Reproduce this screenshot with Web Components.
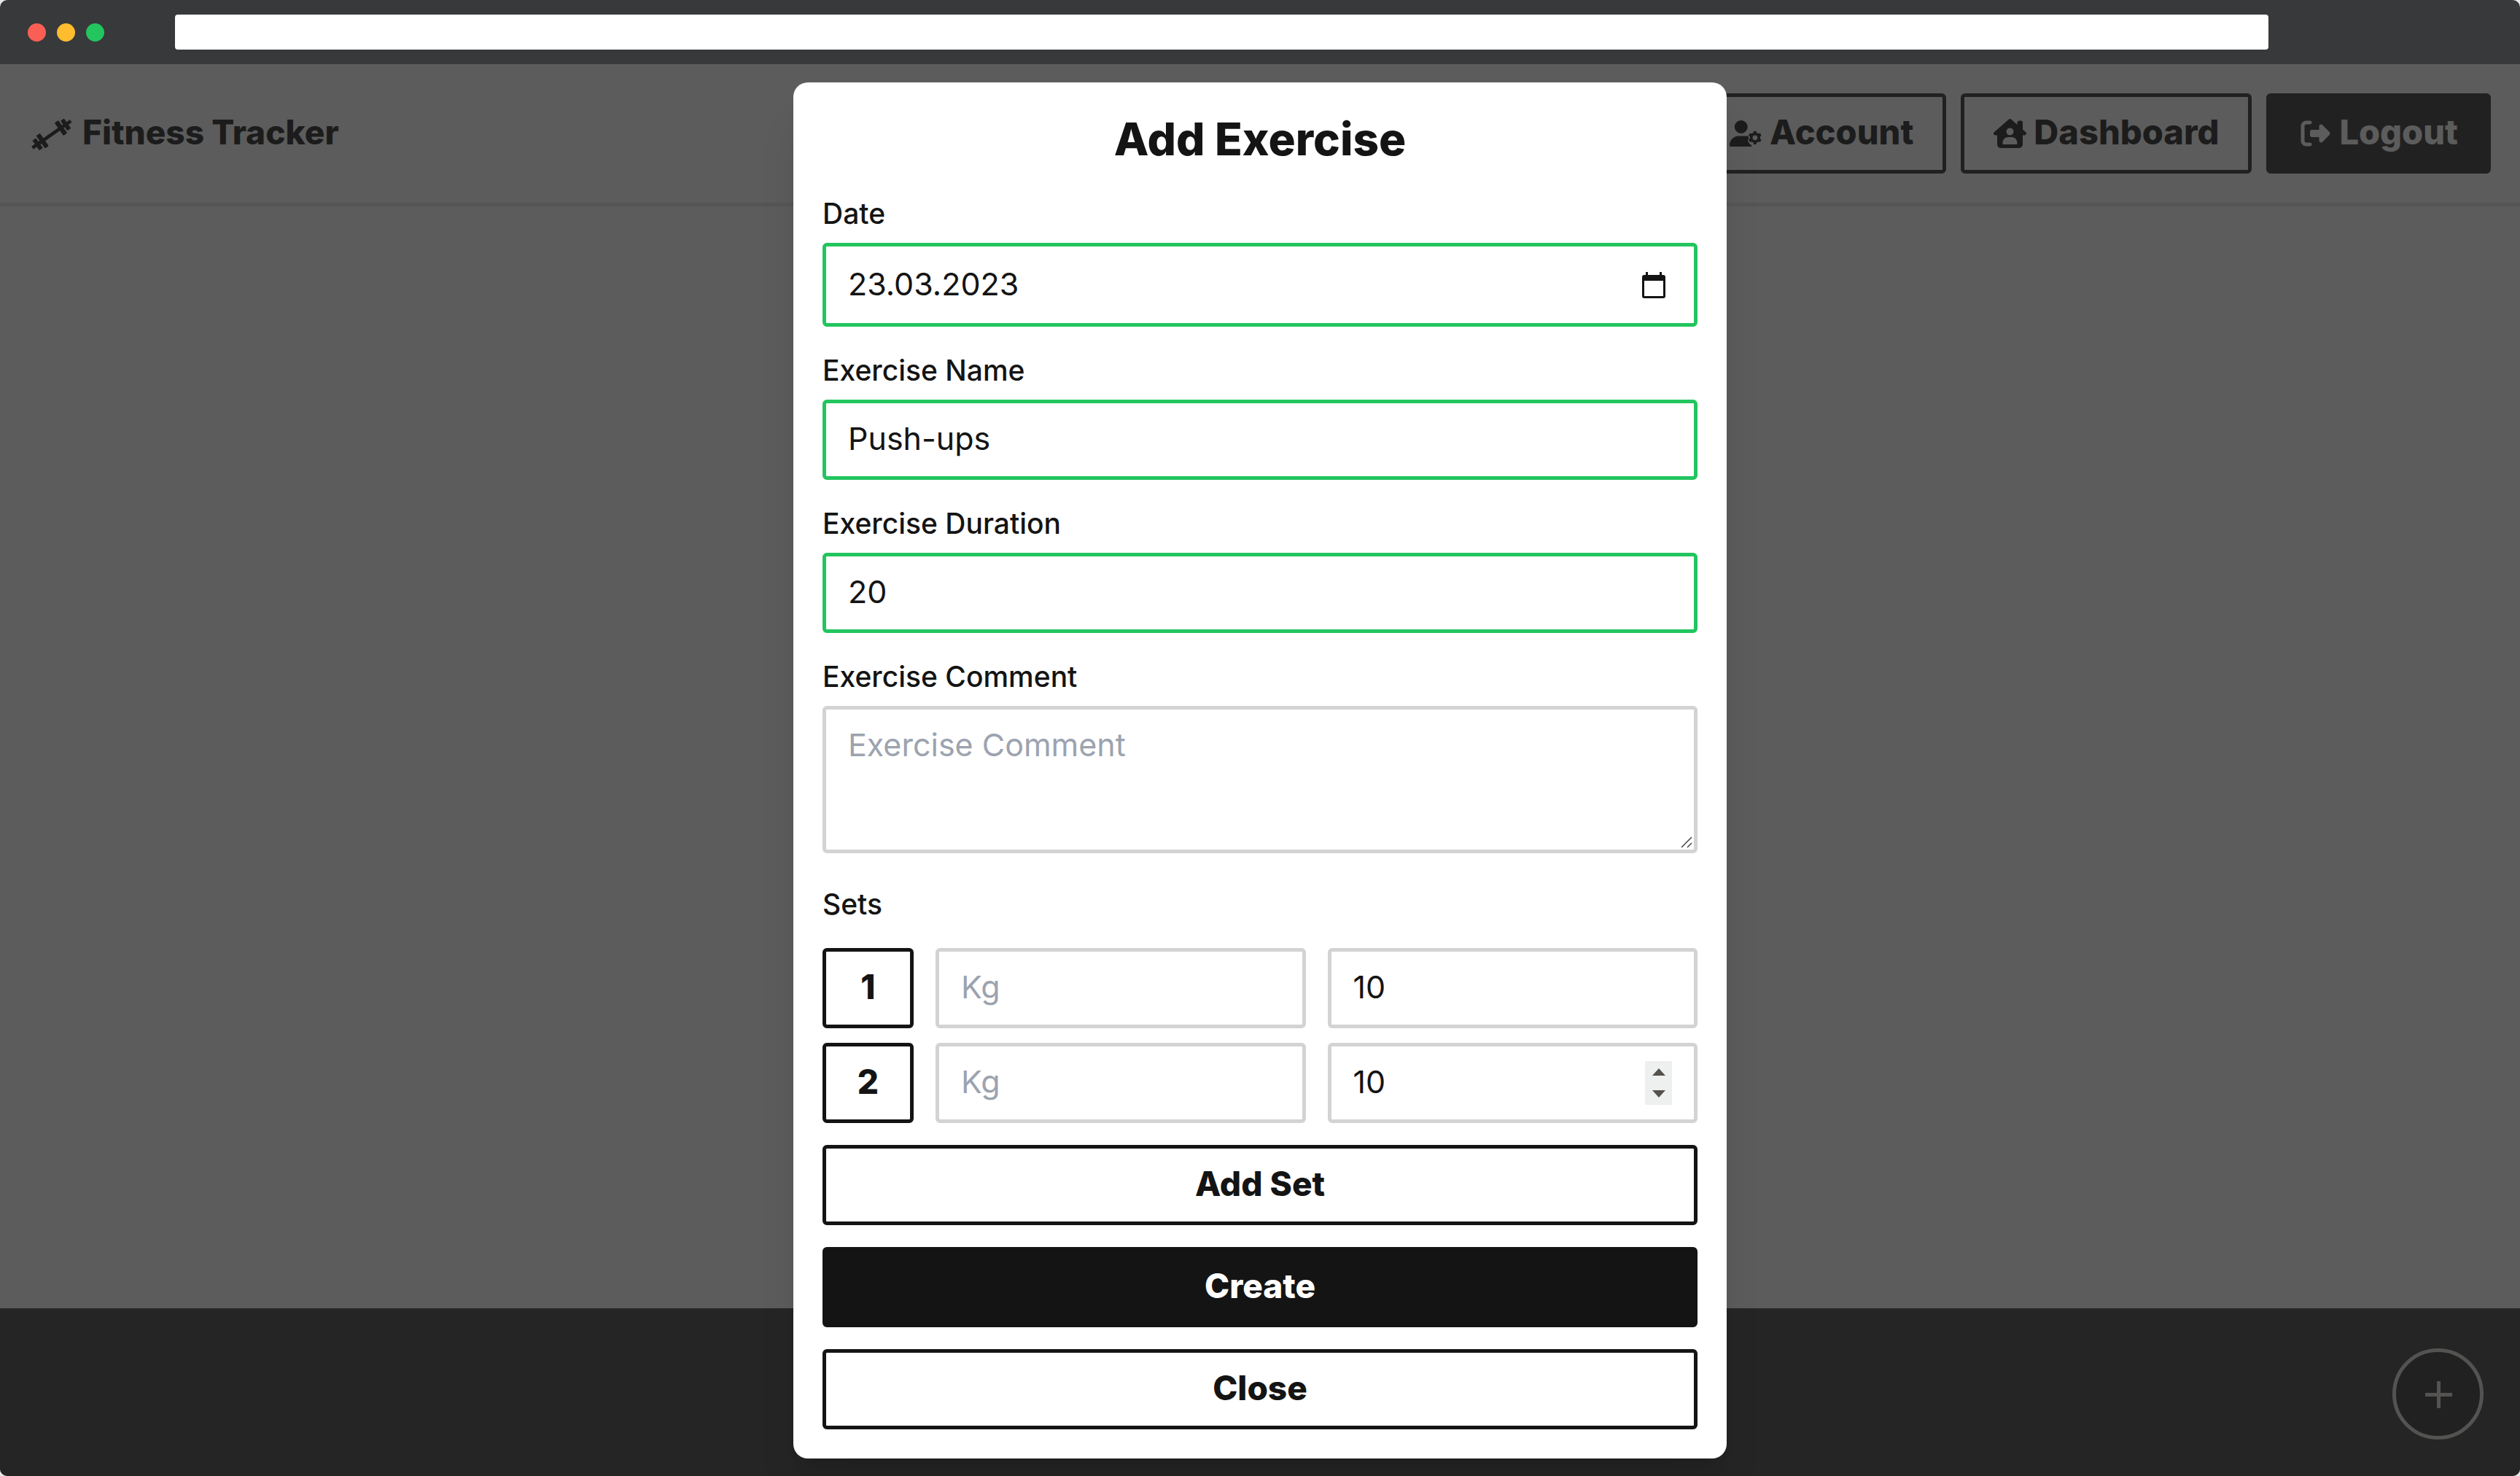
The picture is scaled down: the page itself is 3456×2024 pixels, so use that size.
<!DOCTYPE html>
<html lang="en">
<head>
<meta charset="utf-8">
<meta name="viewport" content="width=device-width, initial-scale=1">
<title>Fitness Tracker</title>
<style>
  html { background: #e8e8e8; }
  body { margin: 0; font-family: Inter, "Open Sans", sans-serif; color: #141414; }
</style>
</head>
<body>
<browser-frame>
  <app-shell></app-shell>
</browser-frame>

<script>
const define = (name, html, setup) => customElements.define(name, class extends HTMLElement {
  constructor() {
    super();
    const tpl = document.createElement('template');
    tpl.innerHTML = '<style>*{box-sizing:border-box}</style>' + html;
    this.attachShadow({ mode: 'open' }).append(tpl.content.cloneNode(true));
  }
  connectedCallback() { if (setup) setup.call(this, this.shadowRoot); }
});

define('fa-icon', `
<style>
  :host { display: inline-flex; flex: none; }
  svg { display: block; width: var(--icon-width, 45px); height: var(--icon-height, 40px); fill: currentColor; }
</style>`, function (root) {
  const icons = {
    dumbbell: ['0 0 190 150', '<g transform="translate(93 79) rotate(-35)"><rect x="-97" y="-7" width="194" height="14"/><rect x="-56" y="-32" width="19" height="64" rx="3"/><rect x="37" y="-32" width="19" height="64" rx="3"/><rect x="-80" y="-25" width="18" height="50" rx="3"/><rect x="62" y="-25" width="18" height="50" rx="3"/></g>'],
    account: ['0 0 640 512', '<path d="M224 256A128 128 0 1 0 224 0a128 128 0 1 0 0 256zM178 304C80 304 0 384 0 482c0 17 13 30 30 30h388c8 0 15-3 20-7-9-6-17-15-18-30-34-10-47-40-62-70-10-24 8-38 24-50-14-16-22-33-12-51zM472 208l48 0 8 34a114 114 0 0 1 32 19l34-11 26 44-26 25a114 114 0 0 1 0 38l26 25-26 44-34-11a114 114 0 0 1-32 19l-8 34h-48l-8-34a114 114 0 0 1-32-19l-34 11-26-44 26-25a114 114 0 0 1 0-38l-26-25 26-44 34 11a114 114 0 0 1 32-19zM496 290a48 48 0 1 0 0 96 48 48 0 1 0 0-96z" fill-rule="evenodd"/>'],
    dashboard: ['0 0 576 512', '<path d="M544 288c17 0 32-14 32-32c1-9-3-17-11-24L512 185V64c0-18-14-32-32-32H448c-18 0-32 14-32 32v37L310 7c-6-5-14-7-21-7s-15 1-22 8L10 232c-7 7-10 15-10 24c0 18 14 32 32 32h32v160c0 35 29 64 64 64h320c36 0 64-29 64-64V288zM288 160a64 64 0 1 1 0 128 64 64 0 1 1 0-128zM160 432c0-62 36-112 96-112h64c60 0 96 50 96 112c0 9-7 16-16 16H176c-9 0-16-7-16-16z" fill-rule="evenodd"/>'],
    logout: ['0 0 512 512', '<path d="M378 106L501 229c7 7 11 17 11 27s-4 20-11 27L378 406c-6 6-15 10-24 10c-19 0-34-15-34-34v-62H192c-18 0-32-14-32-32v-64c0-18 14-32 32-32h128v-62c0-19 15-34 34-34c9 0 18 4 24 10zM160 96H96c-18 0-32 14-32 32v256c0 18 14 32 32 32h64c18 0 32 14 32 32s-14 32-32 32H96c-53 0-96-43-96-96V128C0 75 43 32 96 32h64c18 0 32 14 32 32s-14 32-32 32z"/>'],
    plus: ['0 0 40 40', '<path d="M18 2h5v16h16v5H23v16h-5V23H2v-5h16z"/>'],
    calendar: ['0 0 32 36', '<path d="M5 0h3v4h16V0h3v4h2a3 3 0 0 1 3 3v26a3 3 0 0 1-3 3H3a3 3 0 0 1-3-3V7a3 3 0 0 1 3-3h2zM3 12v21h26V12z" fill-rule="evenodd"/>'],
    grip: ['0 0 16 16', '<path d="M1 15L15 1M9 15l6-6" fill="none" stroke="currentColor" stroke-width="1.500"/>'],
    up: ['0 0 18 10', '<path d="M9 0l9 10H0z"/>'],
    down: ['0 0 18 10', '<path d="M0 0h18L9 10z"/>']
  };
  const icon = icons[this.getAttribute('name')];
  if (!icon || root.querySelector('svg')) return;
  root.append(new DOMParser().parseFromString(
    `<svg xmlns="http://www.w3.org/2000/svg" viewBox="${icon[0]}" aria-hidden="true">${icon[1]}</svg>`, 'image/svg+xml').documentElement);
});

define('browser-frame', `
<style>
  :host { display: flex; flex-direction: column; min-height: 100vh; border-radius: 10px; overflow: hidden; background: #fff; }
  .bar { display: flex; align-items: center; gap: 15px; height: 88px; padding: 0 345px 0 38px; background: #38393b; }
  .dot { width: 25px; height: 25px; border-radius: 50%; flex: none; }
  .r { background: #f95f55 } .y { background: #febc2e } .g { background: #22c55e }
  input { flex: 1; min-width: 0; height: 48px; margin-left: 82px; border: 0; border-radius: 4px; background: #fff; font: 30px Inter, sans-serif; padding: 0 20px; }
  slot { display: contents; }
</style>
<div class="bar">
  <span class="dot r"></span><span class="dot y"></span><span class="dot g"></span>
  <input type="text" aria-label="Address">
</div>
<slot></slot>`);

define('app-shell', `
<style>
  :host { position: relative; flex: 1; display: flex; flex-direction: column; }
  header { display: flex; align-items: center; justify-content: space-between; gap: 20px; padding: 40px; border-bottom: 5px solid #ebe4dc; }
  nav { display: flex; gap: 20px; }
  a.brand { display: flex; align-items: center; gap: 10px; color: #000; text-decoration: none; font-weight: 800; font-size: 46px; line-height: 70px; --icon-width: 63px; --icon-height: 50px; }
  .brand span { padding-bottom: 4px; }
  main { flex: 1; }
  footer { height: 230px; background: #262626; }
  .fab { position: absolute; right: 50px; bottom: 50px; width: 125px; height: 125px; display: grid; place-items: center; padding: 0; border: 5px solid #dedad2; border-radius: 50%; background: #141414; color: #dedad2; --icon-width: 40px; }
  .veil { position: absolute; inset: 0; display: grid; place-items: center; padding: 25px 40px 24px; background: rgba(38, 38, 38, .75); }
</style>
<header>
  <a class="brand" href="#"><fa-icon name="dumbbell"></fa-icon><span>Fitness Tracker</span></a>
  <nav>
    <nav-button icon="account">Account</nav-button>
    <nav-button icon="dashboard">Dashboard</nav-button>
    <nav-button icon="logout" solid>Logout</nav-button>
  </nav>
</header>
<main></main>
<footer></footer>
<button class="fab" type="button" aria-label="Add exercise"><fa-icon name="plus"></fa-icon></button>
<div class="veil"><exercise-dialog></exercise-dialog></div>`);

define('nav-button', `
<style>
  :host { display: block; }
  button { display: flex; align-items: center; gap: 10px; height: 110px; padding: 0 40px; border: 5px solid #141414; border-radius: 6px; background: transparent; color: #000; font: 800 47px/70px Inter, sans-serif; }
  .text { padding-bottom: 4px; }
  :host([solid]) button { background: #141414; color: #fff; }
</style>
<button type="button"><span class="text"><slot></slot></span></button>`, function (root) {
  const icon = document.createElement('fa-icon');
  icon.setAttribute('name', this.getAttribute('icon'));
  root.querySelector('button').prepend(icon);
});

define('action-button', `
<style>
  :host { display: block; }
  button { display: block; width: 100%; height: 110px; padding: 0 0 4px; border: 5px solid #141414; border-radius: 6px; background: #fff; color: #141414; font: 800 46px/70px Inter, sans-serif; text-align: center; }
  :host([solid]) button { background: #141414; color: #fff; }
</style>
<button type="button"><slot></slot></button>`);

const inputStyle = `
  input, textarea { display: block; width: 100%; height: 110px; margin: 0; padding: 13px 30px 17px; border: 5px solid #d3d3d3; border-radius: 6px; background: #fff; color: #141414; font: 400 43px/70px Inter, sans-serif; outline: 0; appearance: none; }
  ::placeholder { color: #9ca3af; opacity: 1; }
  input[type=number] { appearance: textfield; }
  ::-webkit-inner-spin-button { appearance: none; margin: 0; }`;

define('form-field', `
<style>
  :host { display: flex; flex-direction: column; gap: 10px; }
  label { font-size: 39px; line-height: 60px; font-weight: 500; }
  ${inputStyle}
  :host([valid]) input { border-color: #22c55e; }
  :host([kind=date]) input { height: 115px; }
  textarea { height: 202px; resize: both; }
  ::-webkit-resizer { background: transparent; }
  .control { display: grid; align-items: center; }
  .control > * { grid-area: 1 / 1; }
  .pick { justify-self: end; display: flex; padding: 0; margin-right: 44px; border: 0; background: none; color: #141414; --icon-width: 32px; --icon-height: 36px; }
  .grip { place-self: end; margin: 0 7px 7px 0; pointer-events: none; color: #444; --icon-width: 16px; --icon-height: 16px; }
</style>
<label for="field"></label>
<div class="control"></div>`, function (root) {
  const kind = this.getAttribute('kind') || 'text';
  const el = document.createElement(kind === 'area' ? 'textarea' : 'input');
  el.id = 'field';
  if (kind === 'number') el.type = 'number';
  el.value = this.getAttribute('value') || '';
  el.placeholder = this.getAttribute('placeholder') || '';
  root.querySelector('label').textContent = this.getAttribute('label');
  const control = root.querySelector('.control');
  control.replaceChildren(el);
  if (kind === 'date') control.insertAdjacentHTML('beforeend',
    '<button class="pick" type="button" aria-label="Open calendar"><fa-icon name="calendar"></fa-icon></button>');
  if (kind === 'area') control.insertAdjacentHTML('beforeend', '<fa-icon class="grip" name="grip"></fa-icon>');
});

define('set-row', `
<style>
  :host { display: grid; grid-template-columns: 125px 1fr 1fr; gap: 30px; }
  ${inputStyle}
  .reps { display: grid; align-items: center; }
  .reps > * { grid-area: 1 / 1; }
  .spin { display: none; justify-self: end; margin-right: 35px; width: 37px; height: 60px; flex-direction: column; background: #eef0ef; color: #55514d; --icon-width: 18px; --icon-height: 10px; }
  :host([active]) .spin { display: flex; }
  .spin button { flex: 1; display: grid; place-items: center; padding: 0; border: 0; background: none; color: inherit; }
</style>
<action-button></action-button>
<input type="number" placeholder="Kg" aria-label="Weight in kg">
<div class="reps">
  <input type="number" aria-label="Repetitions">
  <div class="spin">
    <button type="button" aria-label="Increase"><fa-icon name="up"></fa-icon></button>
    <button type="button" aria-label="Decrease"><fa-icon name="down"></fa-icon></button>
  </div>
</div>`, function (root) {
  root.querySelector('action-button').textContent = this.getAttribute('number');
  root.querySelector('.reps input').value = this.getAttribute('reps');
});

define('exercise-dialog', `
<style>
  :host { display: block; width: 100%; max-width: 1280px; }
  form { display: flex; flex-direction: column; gap: 30px; padding: 40px; border-radius: 20px; background: #fff; box-shadow: 0 50px 62px -12px rgba(0,0,0,.1), 0 20px 25px -15px rgba(0,0,0,.1); }
  h2 { margin: 0; padding-bottom: 4px; font-size: 62px; line-height: 76px; font-weight: 800; text-align: center; }
  section { display: flex; flex-direction: column; gap: 20px; }
  h3 { margin: 0; font-size: 39px; line-height: 80px; font-weight: 500; }
</style>
<form role="dialog" aria-label="Add Exercise">
  <h2>Add Exercise</h2>
  <form-field kind="date" label="Date" value="23.03.2023" valid></form-field>
  <form-field label="Exercise Name" value="Push-ups" valid></form-field>
  <form-field kind="number" label="Exercise Duration" value="20" valid></form-field>
  <form-field kind="area" label="Exercise Comment" placeholder="Exercise Comment"></form-field>
  <section>
    <h3>Sets</h3>
    <set-row number="1" reps="10"></set-row>
    <set-row number="2" reps="10" active></set-row>
  </section>
  <action-button>Add Set</action-button>
  <action-button solid>Create</action-button>
  <action-button>Close</action-button>
</form>`);
</script>
</body>
</html>
